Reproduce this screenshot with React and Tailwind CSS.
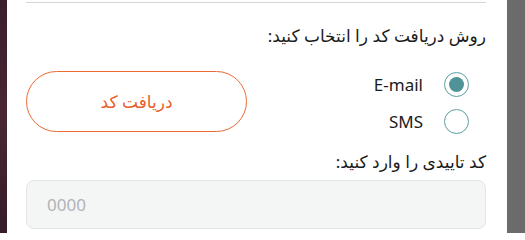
import { useState } from 'react';

const FONT = "font-['Noto_Sans','DejaVu_Sans',sans-serif]";

function Radio({ label, checked, onSelect }) {
  return (
    <button type="button" onClick={onSelect} className="flex items-center gap-[21px] h-[25px]">
      <span className="w-[25px] h-[25px] rounded-full border-[1.5px] border-[#5c9ea2] flex items-center justify-center shrink-0">
        {checked && <span className="w-[15px] h-[15px] rounded-full bg-[#4f9297]" />}
      </span>
      <span className="text-[17px] leading-[25px] text-[#1b1b1b]">{label}</span>
    </button>
  );
}

export default function App() {
  const [method, setMethod] = useState('email');
  const [code, setCode] = useState('');

  return (
    <div className={`flex w-[525px] h-[233px] overflow-hidden ${FONT}`}>
      <div className="w-[7px] shrink-0 bg-gradient-to-b from-[#3a1e2b] via-[#4a2634] to-[#361c28]" />
      <div dir="rtl" className="flex-1 bg-white pr-[21px] pl-[19px]">
        <div className="mt-[2px] h-px bg-[#d5d5d5]" />

        <p className="mt-[20px] text-[17px] leading-[26px] text-[#1b1b1b]">روش دریافت کد را انتخاب کنید:</p>

        <div className="mt-[22px] h-[61px] flex items-start justify-between">
          <div className="flex flex-col gap-[12px] pt-px pr-[17px]">
            <Radio label="E-mail" checked={method === 'email'} onSelect={() => setMethod('email')} />
            <Radio label="SMS" checked={method === 'sms'} onSelect={() => setMethod('sms')} />
          </div>
          <button
            type="button"
            className="w-[221px] h-[61px] rounded-full border border-[#ec6a34] text-[#e8602b] text-[17px] flex items-center justify-center"
          >
            دریافت کد
          </button>
        </div>

        <p className="mt-[17px] text-[17px] leading-[26px] text-[#1b1b1b]">کد تاییدی را وارد کنید:</p>

        <input
          dir="ltr"
          value={code}
          onChange={e => setCode(e.target.value)}
          placeholder="0000"
          className="block mt-[5px] w-full h-[49px] rounded-[8px] border border-[#e4e6e6] bg-[#f4f5f5] px-[20px] text-[17px] text-[#333] placeholder:text-[#b0b3b5] outline-none"
        />
      </div>
      <div className="w-[18px] shrink-0 bg-[#6b6b6b]" />
    </div>
  );
}
